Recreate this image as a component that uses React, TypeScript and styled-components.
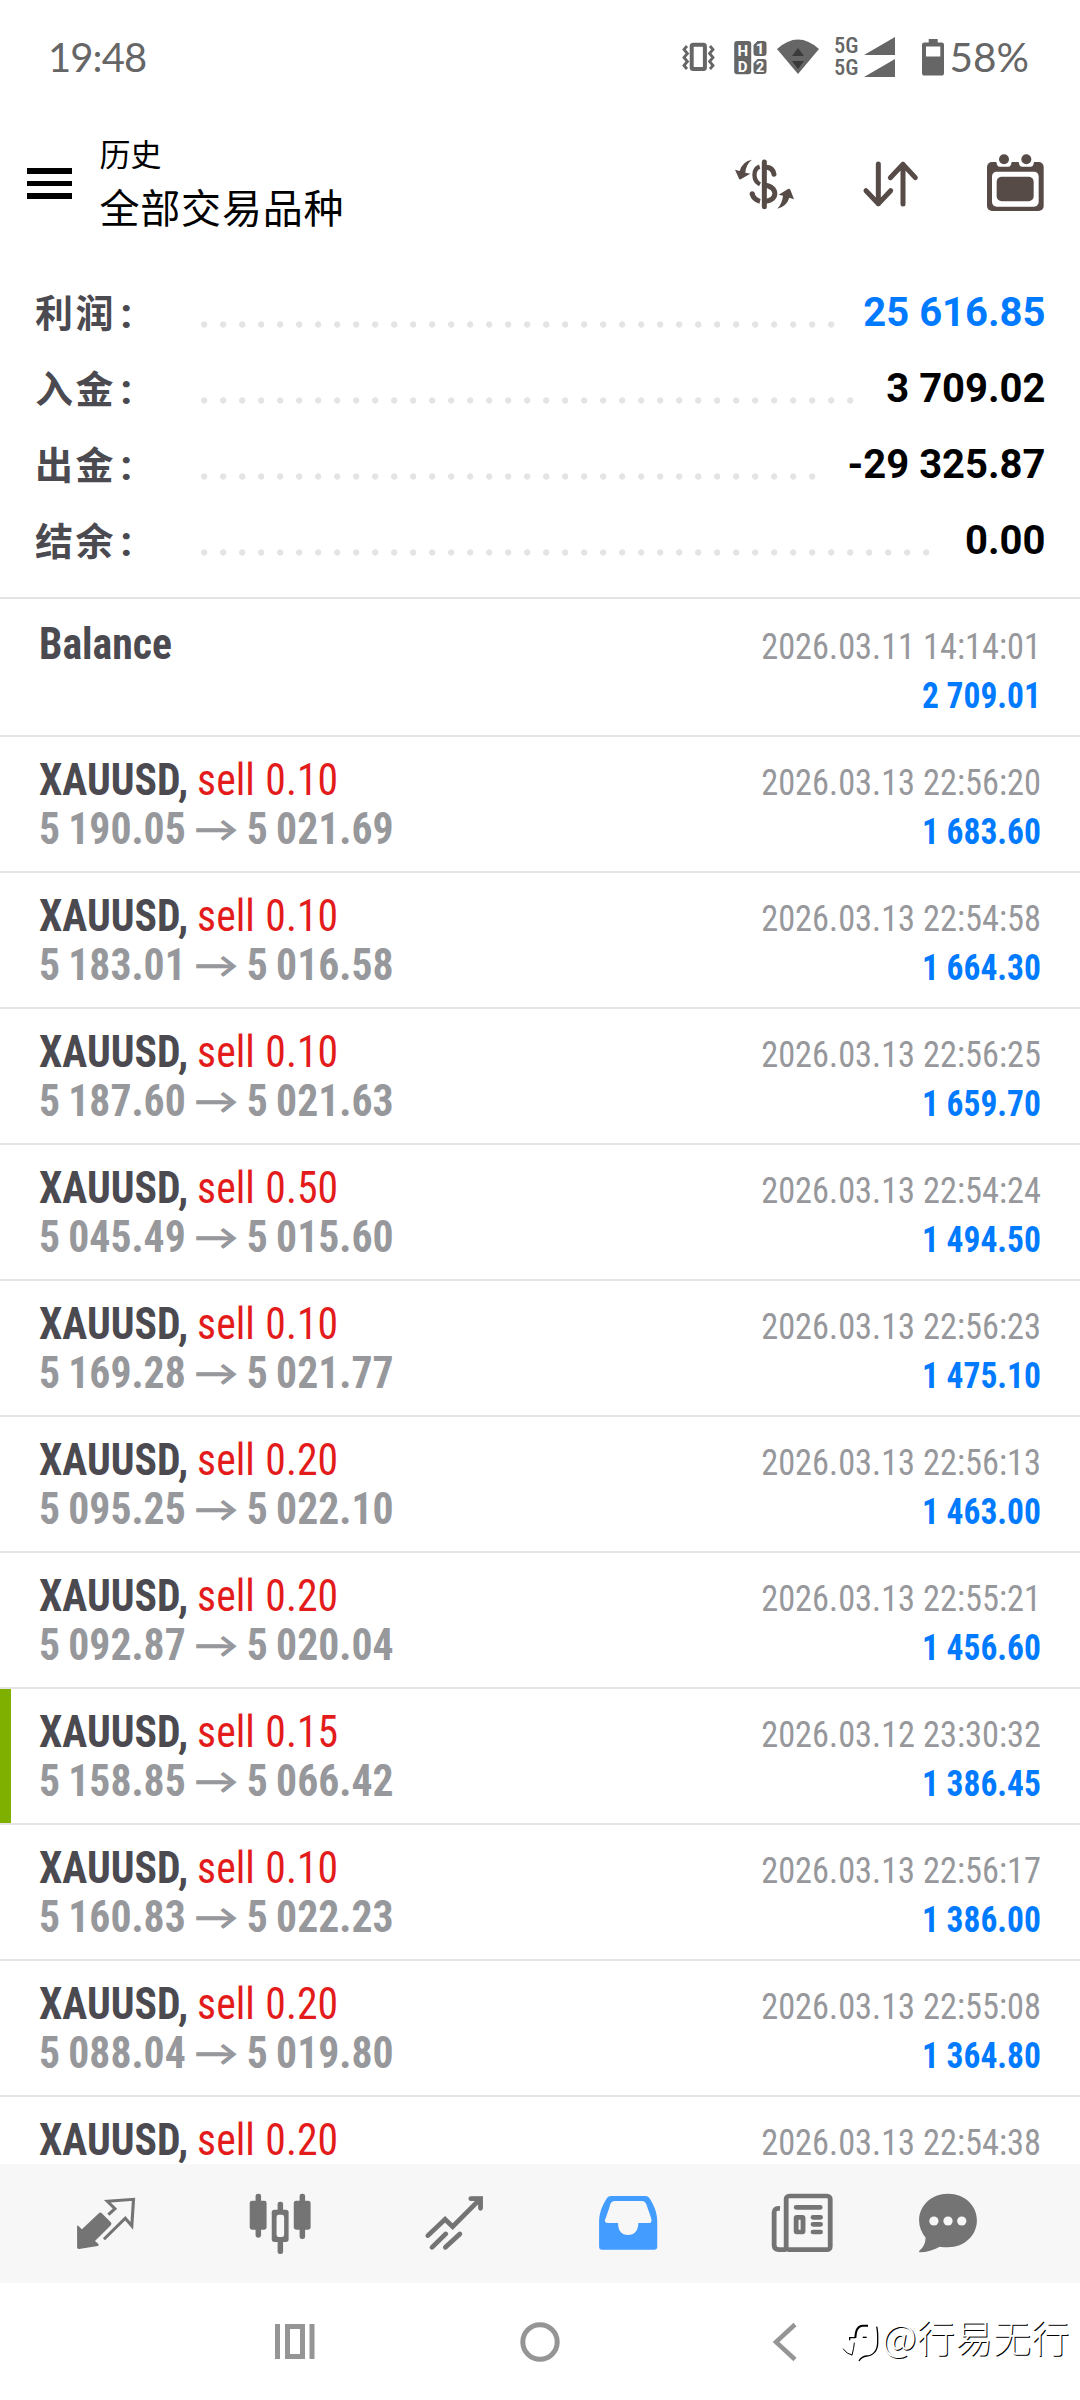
import React from 'react';
import styled, { createGlobalStyle } from 'styled-components';

const cjk = '"Noto Sans CJK SC", sans-serif';
const condensed = `"Roboto Condensed", Roboto, ${cjk}`;
const statusGray = '#666666';
const toolGray = '#574b48';
const tabGray = '#747474';
const navGray = '#959595';

const GlobalStyle = createGlobalStyle`
  * { box-sizing: border-box; }
  body { margin: 0; background: #fff; }
`;

const Screen = styled.div`
  position: relative;
  display: flex;
  flex-direction: column;
  width: 1080px;
  height: 2400px;
  overflow: hidden;
  background: #fff;
  font-family: Roboto, ${cjk};
`;

const StatusBar = styled.div`
  display: flex;
  align-items: center;
  flex: none;
  height: 113px;
  padding: 0 51px 0 48px;
  color: ${statusGray};
`;

const Clock = styled.span`
  flex: 1;
  font: 400 40px/40px Lato, sans-serif;
  letter-spacing: -0.9px;
`;

const Icon = styled.svg<{ $gap?: number }>`
  display: block;
  flex: none;
  overflow: visible;
  margin-left: ${p => p.$gap ?? 0}px;
`;

const Networks = styled.div`
  display: flex;
  flex-direction: column;
  margin-left: 15px;
  width: 29px;
  font: 500 22.5px/21.7px ${condensed};
`;

const Battery = styled.span`
  margin-left: 5.5px;
  font: 400 40.5px/40px Lato, sans-serif;
`;

const Header = styled.header`
  display: flex;
  align-items: center;
  flex: none;
  height: 141px;
  padding: 0 36px 0 27px;
`;

const MenuButton = styled.div`
  display: flex;
  flex-direction: column;
  gap: 7px;
  width: 45px;
`;

const MenuBar = styled.div`
  height: 5.4px;
  background: #000;
`;

const Titles = styled.div`
  display: flex;
  flex-direction: column;
  flex: 1;
  margin: -2px 0 0 27.5px;
  color: #000;
  font-family: ${cjk};
`;

const Title = styled.div`
  font-size: 31px;
  line-height: 46px;
`;

const Subtitle = styled.div`
  font-size: 40px;
  line-height: 60px;
  letter-spacing: 0.8px;
`;

const Summary = styled.section`
  display: flex;
  flex-direction: column;
  flex: none;
  padding: 20px 34.5px 19px 35px;
  border-bottom: 2px solid #e4e4e4;
`;

const SummaryRow = styled.div`
  display: flex;
  align-items: center;
  height: 76px;
`;

const SummaryLabel = styled.span`
  display: flex;
  align-items: baseline;
  width: 166px;
  padding-bottom: 2px;
  color: #4b4a50;
  font: 700 38px/60px ${cjk};
  letter-spacing: 2.6px;
`;

const Colon = styled.span`
  margin-left: 4px;
  font: 700 43px/60px Roboto, sans-serif;
  transform: translateY(1px);
`;

const Dots = styled.div`
  flex: 1;
  align-self: flex-start;
  height: 7px;
  margin: 47px 26px 0 0;
  background: radial-gradient(circle at 3.2px 3.5px, #e4e4e4 2.8px, transparent 3.5px) 0 0 / 19px 7px repeat-x;
`;

const SummaryValue = styled.span<{ $accent?: boolean }>`
  padding-top: 1.5px;
  color: ${p => (p.$accent ? '#007aff' : '#000')};
  font-size: 40px;
  font-weight: 700;
  line-height: 60px;
`;

const DealList = styled.main`
  display: flex;
  flex-direction: column;
  flex: 1;
  min-height: 0;
  overflow: hidden;
`;

const Deal = styled.article<{ $marked?: boolean; $first?: boolean }>`
  display: flex;
  flex-direction: column;
  flex: none;
  height: ${p => (p.$first ? 138 : 136)}px;
  padding: ${p => (p.$first ? 20.5 : 18.5)}px 39px 0 39.2px;
  border-bottom: 2px solid #e4e4e4;
  background: linear-gradient(#7fb000, #7fb000) 0 0 / ${p => (p.$marked ? 11 : 0)}px 100% no-repeat;
  background-clip: padding-box;
`;

const Line = styled.div`
  display: flex;
  align-items: baseline;
  height: 49px;
  white-space: pre;

  &::before {
    content: '\\200b';
    width: 0;
    font: 700 44.5px/49px ${condensed};
  }
`;

const Left = styled.div`
  color: #4b4a50;
  font: 700 44.5px/49px ${condensed};
  word-spacing: -1.5px;
  transform: scaleX(0.937);
  transform-origin: 0 50%;
`;

const Side = styled.span`
  margin-left: 0.7px;
  color: #e31b1b;
  font-weight: 400;
  word-spacing: 1px;
`;

const Prices = styled(Left)`
  display: flex;
  color: #97989c;
`;

const Arrow = styled.span`
  margin: 0 8.6px 0 8.6px;
  font: 700 48px/49px Lato, sans-serif;
  transform: translateY(-1.6px) scaleY(0.74);
`;

const Time = styled.div`
  margin-left: auto;
  color: #97989c;
  font: 400 36px/40px ${condensed};
  transform: scaleX(0.955);
  transform-origin: 100% 50%;
`;

const Profit = styled(Time)`
  color: #007aff;
  font-weight: 700;
  transform: scaleX(0.93);
`;

const TabBar = styled.nav`
  display: flex;
  flex: none;
  height: 119px;
  padding-left: 18.5px;
  background: #f7f7f7;
`;

const Tab = styled.div<{ $width?: number }>`
  display: flex;
  align-items: center;
  justify-content: center;
  width: ${p => p.$width ?? 174}px;
`;

const SystemNav = styled.div`
  display: flex;
  justify-content: center;
  flex: none;
  height: 117px;
`;

const SystemButton = styled(Tab)`
  width: 245px;
`;

const Watermark = styled.div`
  position: absolute;
  right: 10.5px;
  bottom: 34px;
  display: flex;
  align-items: center;
  color: #fff;
  font: 300 38px/60px ${cjk};
  letter-spacing: 0.2px;
  text-shadow: 1px 1px 0.6px #000;
`;

const WatermarkLogo = styled(Icon)`
  margin: 13px -2px 0 0;
`;

const summary = [
  { label: '利润', value: '25 616.85', accent: true },
  { label: '入金', value: '3 709.02' },
  { label: '出金', value: '-29 325.87' },
  { label: '结余', value: '0.00' },
];

interface DealData {
  volume: string;
  time: string;
  open?: string;
  close?: string;
  profit?: string;
  marked?: boolean;
}

const deals: DealData[] = [
  { volume: '0.10', open: '5 190.05', close: '5 021.69', time: '2026.03.13 22:56:20', profit: '1 683.60' },
  { volume: '0.10', open: '5 183.01', close: '5 016.58', time: '2026.03.13 22:54:58', profit: '1 664.30' },
  { volume: '0.10', open: '5 187.60', close: '5 021.63', time: '2026.03.13 22:56:25', profit: '1 659.70' },
  { volume: '0.50', open: '5 045.49', close: '5 015.60', time: '2026.03.13 22:54:24', profit: '1 494.50' },
  { volume: '0.10', open: '5 169.28', close: '5 021.77', time: '2026.03.13 22:56:23', profit: '1 475.10' },
  { volume: '0.20', open: '5 095.25', close: '5 022.10', time: '2026.03.13 22:56:13', profit: '1 463.00' },
  { volume: '0.20', open: '5 092.87', close: '5 020.04', time: '2026.03.13 22:55:21', profit: '1 456.60' },
  { volume: '0.15', open: '5 158.85', close: '5 066.42', time: '2026.03.12 23:30:32', profit: '1 386.45', marked: true },
  { volume: '0.10', open: '5 160.83', close: '5 022.23', time: '2026.03.13 22:56:17', profit: '1 386.00' },
  { volume: '0.20', open: '5 088.04', close: '5 019.80', time: '2026.03.13 22:55:08', profit: '1 364.80' },
  { volume: '0.20', time: '2026.03.13 22:54:38' },
];

function StatusIcons() {
  return (
    <>
      <Icon width="34" height="41" viewBox="682 36 34 41" fill="none" stroke={statusGray}>
        <rect x="691.7" y="44.7" width="13.2" height="24.4" rx="1.5" strokeWidth="4" />
        <path d="M687 46l-3 3.5 3.4 4-3.4 4 3.4 4-3.4 4 3 3.5M710 46l3 3.5-3.4 4 3.4 4-3.4 4 3.4 4-3 3.5" strokeWidth="2.8" />
      </Icon>
      <Icon $gap={17.5} width="33" height="41" viewBox="733.5 36 33 41" fill={statusGray}>
        <rect x="733.7" y="41" width="17" height="33.3" rx="3" />
        <path d="M757 41h6q3 0 3 3v9q0 3-3 3h-7q-3 0-3-3v-8zM757 59h6q3 0 3 3v9q0 3-3 3h-7q-3 0-3-3v-8z" />
        <g fill="#fff" fontFamily="Roboto" fontWeight="700" fontSize="15" textAnchor="middle">
          <text x="742.2" y="55.5">H</text>
          <text x="742.2" y="71.500">D</text>
          <text x="759.5" y="53.800">1</text>
          <text x="759.5" y="72">2</text>
        </g>
      </Icon>
      <Icon $gap={10.5} width="42" height="41" viewBox="777 36 42 41" fill={statusGray}>
        <path d="M777 49Q798 30 819 49L798 74Z" />
        <path d="M792 56L798 48L804 56ZM792 61H804L798 69Z" fill="#3a3a3a" />
      </Icon>
      <Networks>
        <span>5G</span>
        <span>5G</span>
      </Networks>
      <Icon $gap={1} width="31" height="41" viewBox="864 36 31 41" fill={statusGray}>
        <path d="M864 55L895 37V55ZM864 77L895 59V77Z" />
      </Icon>
      <Icon $gap={27} width="22" height="41" viewBox="922 36 22 41" fill={statusGray}>
        <path fillRule="evenodd" d="M928.7 39h9v3.5h4q2.3 0 2.3 2.3V73q0 2.6-2.6 2.6H924.6q-2.6 0-2.6-2.6V44.8q0-2.3 2.3-2.3h4.4zM926 46.5v10h14.3v-10z" />
      </Icon>
      <Battery>58%</Battery>
    </>
  );
}

function Toolbar() {
  return (
    <>
      <Icon width="59" height="60" viewBox="105 100 177 180" fill="none" stroke={toolGray} strokeWidth="15">
        <path d="M193 124V258" strokeLinecap="round" />
        <path d="M193 140Q218 138 222 161" strokeLinecap="round" />
        <path d="M193 194C235 196 235 242 193 242" />
        <path d="M179 138C158 145 158 180 180 191" strokeWidth="13" />
        <path d="M156 218Q161 237 180 242" />
        <circle cx="156.500" cy="219" r="7.500" fill={toolGray} stroke="none" />
        <path stroke="none" fill={toolGray} d="M156 117Q138 130 136 156L151 159L122 176Q119 177 117 174L105 147L119 151Q127 122 156 117ZM232 264Q247 247 249 225L236 222L264 205Q268 203 271 207L282 236L268 231Q260 257 232 264Z" />
      </Icon>
      <Icon $gap={69} width="55" height="60" viewBox="489 100 165 180" fill="none" stroke={toolGray} strokeWidth="15" strokeLinecap="round" strokeLinejoin="round">
        <path d="M535 130V249M498 210L535 249L572 210M609 250V131M571 171L609 131L646 171" />
      </Icon>
      <Icon $gap={69} width="57" height="60" viewBox="861 100 171 180" fill={toolGray}>
        <rect x="861" y="124" width="170" height="147" rx="15" />
        <path d="M888 120H936L933 132Q931 138 925 138H899Q893 138 891 132ZM955 120H1003L1000 132Q998 138 992 138H966Q960 138 958 132Z" fill="#fff" />
        <rect x="876" y="153" width="140" height="105" rx="14" fill="#fff" />
        <rect x="890" y="168" width="111" height="74" rx="15" />
        <circle cx="912" cy="116" r="15" />
        <circle cx="979" cy="116" r="15" />
      </Icon>
    </>
  );
}

function TabIcon({ cx, children }: { cx: number; children: React.ReactNode }) {
  return (
    <Icon width="64" height="63.3" viewBox={`${cx - 93} 186 186 190`} preserveAspectRatio="none" fill={tabGray}>
      {children}
    </Icon>
  );
}

export default function App() {
  return (
    <Screen>
      <GlobalStyle />
      <StatusBar>
        <Clock>19:48</Clock>
        <StatusIcons />
      </StatusBar>
      <Header>
        <MenuButton>
          <MenuBar />
          <MenuBar />
          <MenuBar />
        </MenuButton>
        <Titles>
          <Title>历史</Title>
          <Subtitle>全部交易品种</Subtitle>
        </Titles>
        <Toolbar />
      </Header>
      <Summary>
        {summary.map(row => (
          <SummaryRow key={row.label}>
            <SummaryLabel>
              {row.label}
              <Colon>:</Colon>
            </SummaryLabel>
            <Dots />
            <SummaryValue $accent={row.accent}>{row.value}</SummaryValue>
          </SummaryRow>
        ))}
      </Summary>
      <DealList>
        <Deal $first>
          <Line>
            <Left>Balance</Left>
            <Time>2026.03.11 14:14:01</Time>
          </Line>
          <Line>
            <Profit>2 709.01</Profit>
          </Line>
        </Deal>
        {deals.map(deal => (
          <Deal key={deal.time} $marked={deal.marked}>
            <Line>
              <Left>
                XAUUSD, <Side>sell {deal.volume}</Side>
              </Left>
              <Time>{deal.time}</Time>
            </Line>
            {deal.profit && (
              <Line>
                <Prices>
                  <span>{deal.open}</span>
                  <Arrow>→</Arrow>
                  <span>{deal.close}</span>
                </Prices>
                <Profit>{deal.profit}</Profit>
              </Line>
            )}
          </Deal>
        ))}
      </DealList>
      <TabBar>
        <Tab>
          <TabIcon cx={308}>
            <path d="M224 289Q224 284 228 288L238 298L288 249Q291 246 295 249L322 277Q326 281 322 286L276 333L286 342Q289 346 284 348L230 357Q224 358 224 352Z" />
            <path d="M315 254L334 236L312 214L388 208L383 288L364 265L302 328" fill="none" stroke={tabGray} strokeWidth="9" />
          </TabIcon>
        </Tab>
        <Tab>
          <TabIcon cx={811}>
            <rect x="723" y="212" width="49" height="87" rx="7" />
            <rect x="740" y="191" width="16" height="132" rx="7" />
            <rect x="851" y="212" width="49" height="87" rx="7" />
            <rect x="868" y="191" width="16" height="136" rx="7" />
            <rect x="804" y="215" width="16" height="157" rx="7" />
            <rect x="787" y="239" width="49" height="97" rx="8" />
            <rect x="801" y="254" width="22" height="67" rx="7" fill="#f7f7f7" />
          </TabIcon>
        </Tab>
        <Tab>
          <TabIcon cx={1317}>
            <path d="M1241 317L1291 268L1313 290L1392 208M1366 206H1394V235M1253 352L1293 312M1292 352L1334 312" fill="none" stroke={tabGray} strokeWidth="14" strokeLinecap="round" />
            <path d="M1372 200H1400V228Z" />
          </TabIcon>
        </Tab>
        <Tab>
          <TabIcon cx={255}>
            <path fill="#439cff" fillRule="evenodd" d="M171 350V275C171 245 184 220 194 204Q198 198 206 198H305Q313 198 317 204C328 222 340 245 340 275V350Q340 359 331 359H180Q171 359 171 350ZM188 271C194 252 200 237 203 224Q207 213 216 213H295Q304 213 308 222C313 238 320 255 323 268Q325 279 317 279H285C285 302 274 315 255 315C236 315 226 302 226 279H196Q187 279 188 271Z" />
          </TabIcon>
        </Tab>
        <Tab>
          <TabIcon cx={762}>
            <g fill="none" stroke={tabGray} strokeWidth="14">
              <rect x="716" y="198" width="128" height="161" rx="9" />
              <path d="M698 235Q681 234 681 247V345Q681 359 695 359H716" />
              <rect x="745" y="262" width="20" height="44" rx="2" />
              <path d="M745 232H815M794 262H816M794 283H816M794 306H816" strokeLinecap="round" />
            </g>
          </TabIcon>
        </Tab>
        <Tab $width={118}>
          <TabIcon cx={1185}>
            <path d="M1185 191C1234 191 1269 227 1269 271C1269 316 1234 352 1185 352Q1172 352 1161 350Q1133 366 1104 367Q1098 367 1103 361Q1119 347 1120 323Q1101 300 1101 271C1101 227 1137 191 1185 191Z" />
            <g fill="#f7f7f7">
              <circle cx="1144" cy="273" r="13.500" />
              <circle cx="1185" cy="273" r="13.500" />
              <circle cx="1225" cy="273" r="13.500" />
            </g>
          </TabIcon>
        </Tab>
      </TabBar>
      <SystemNav>
        <SystemButton>
          <Icon width="40" height="35" viewBox="0 0 40 35" fill={navGray}>
            <path fillRule="evenodd" d="M0 0h5v35H0zM34.500 0h5v35h-5zM10 0h20v35H10zM15 5v25h10V5z" />
          </Icon>
        </SystemButton>
        <SystemButton>
          <Icon width="40" height="40" viewBox="0 0 40 40">
            <circle cx="20" cy="20" r="17.200" fill="none" stroke={navGray} strokeWidth="5" />
          </Icon>
        </SystemButton>
        <SystemButton>
          <Icon width="24" height="40" viewBox="0 0 24 40">
            <path d="M22 2.500L3 20L22 37.500" fill="none" stroke={navGray} strokeWidth="4.500" />
          </Icon>
        </SystemButton>
      </SystemNav>
      <Watermark>
        <WatermarkLogo width="42" height="44" viewBox="30 25 126 132" fill="none" stroke="#000">
          <path d="M70 76Q71 40 92 39H108" strokeWidth="6" />
          <path d="M53 83V75H70" strokeWidth="4" />
          <path d="M67 90Q66 105 60 128" strokeWidth="3" />
          <path d="M60 127Q45 125 33 108" strokeWidth="3" />
          <path d="M92 74H104" strokeWidth="4" />
          <path d="M134 42Q138 55 137 90C137 115 122 129 104 130Q88 132 81 145" strokeWidth="4" />
        </WatermarkLogo>
        @行易无行
      </Watermark>
    </Screen>
  );
}
